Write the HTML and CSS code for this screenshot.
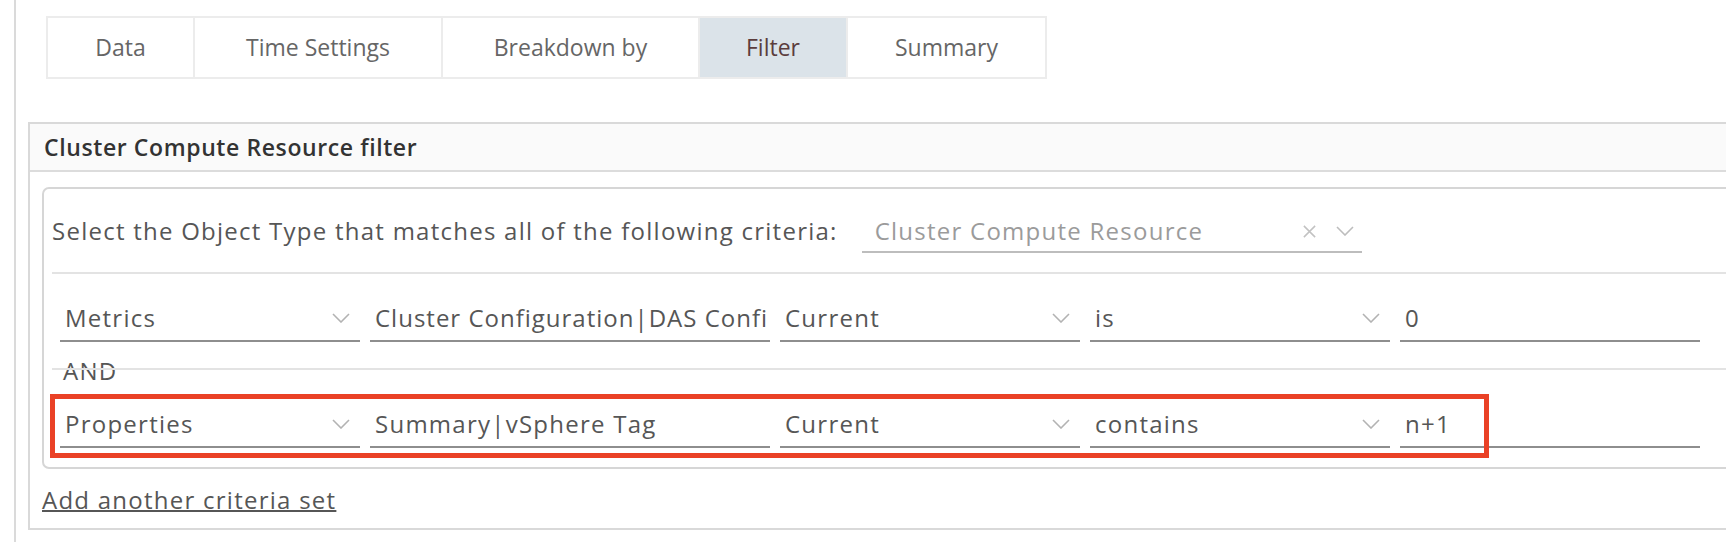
FILE: index.html
```html
<!DOCTYPE html>
<html lang="en">
<head>
<meta charset="utf-8">
<title>Filter</title>
<link rel="stylesheet" href="styles.css">
</head>
<body>
<div class="page">
  <nav class="tabs">
    <div class="tab tab--data">Data</div>
    <div class="tab tab--time">Time Settings</div>
    <div class="tab tab--breakdown">Breakdown by</div>
    <div class="tab tab--filter tab--active">Filter</div>
    <div class="tab tab--summary">Summary</div>
  </nav>

  <section class="panel">
    <header class="panel__head">Cluster Compute Resource filter</header>
    <div class="panel__body">
      <div class="criteria">
        <div class="type-row">
          <span class="type-label text">Select the Object Type that matches all of the following criteria:</span>
          <div class="select select--type text">
            <span class="select__value placeholder">Cluster Compute Resource</span>
            <svg class="icon-x" viewBox="0 0 16 16"><path d="M2 2 L14 14 M14 2 L2 14"/></svg>
            <svg class="chev chev--type" viewBox="0 0 18 10"><path d="M1 1 L9 9 L17 1"/></svg>
          </div>
        </div>

        <div class="rule-row">
          <div class="select w300 text"><span class="select__value">Metrics</span><svg class="chev" viewBox="0 0 18 10"><path d="M1 1 L9 9 L17 1"/></svg></div>
          <div class="select w400 text select--tight"><span class="select__value">Cluster Configuration|DAS Confi</span></div>
          <div class="select w300 text"><span class="select__value">Current</span><svg class="chev" viewBox="0 0 18 10"><path d="M1 1 L9 9 L17 1"/></svg></div>
          <div class="select w300 text"><span class="select__value">is</span><svg class="chev" viewBox="0 0 18 10"><path d="M1 1 L9 9 L17 1"/></svg></div>
          <div class="select w300 text"><span class="select__value">0</span></div>
        </div>

        <div class="and text">AND</div>

        <div class="rule-row rule-row--last">
          <div class="select w300 text"><span class="select__value">Properties</span><svg class="chev" viewBox="0 0 18 10"><path d="M1 1 L9 9 L17 1"/></svg></div>
          <div class="select w400 text"><span class="select__value">Summary|vSphere Tag</span></div>
          <div class="select w300 text"><span class="select__value">Current</span><svg class="chev" viewBox="0 0 18 10"><path d="M1 1 L9 9 L17 1"/></svg></div>
          <div class="select w300 text"><span class="select__value">contains</span><svg class="chev" viewBox="0 0 18 10"><path d="M1 1 L9 9 L17 1"/></svg></div>
          <div class="select w300 text"><span class="select__value">n+1</span></div>
          <div class="highlight"></div>
        </div>
      </div>
      <a class="add-link text" href="#">Add another criteria set</a>
    </div>
  </section>
</div>
</body>
</html>
```

FILE: styles.css
```css
body {
  margin: 0;
  overflow: hidden;
  background: #fff;
  font-family: "Open Sans", "Liberation Sans", sans-serif;
}

.page {
  margin-left: 14px;
  border-left: 2px solid #dadada;
  min-height: 542px;
  padding-top: 16px;
  box-sizing: border-box;
}

/* Tabs */
.tabs {
  display: flex;
  width: max-content;
  margin-left: 30px;
  border: 2px solid #ececec;
}
.tab {
  text-align: center;
  line-height: 59px;
  font-size: 23px;
  color: #666;
}
.tab + .tab {
  border-left: 2px solid #ececec;
}
.tab--data { width: 145px; }
.tab--time { width: 246px; }
.tab--breakdown { width: 255px; }
.tab--filter { width: 146px; }
.tab--summary { width: 197px; }
.tab--active {
  background: #dbe3e9;
  color: #5b3d3d;
}

/* Panel */
.panel {
  margin: 43px -30px 0 12px;
  border: 2px solid #d9d9d9;
}
.panel__head {
  background: #fafafa;
  border-bottom: 2px solid #dcdcdc;
  padding-left: 14px;
  font-size: 23px;
  font-weight: 600;
  letter-spacing: 0.6px;
  line-height: 46px;
  color: #333;
}
.panel__body {
  padding: 15px 0 11px 12px;
}

.text {
  font-size: 24px;
  letter-spacing: 1.25px;
  color: #565656;
}

.criteria {
  border: 2px solid #d6d6d6;
  border-radius: 7px;
}

.type-row {
  margin-left: 8px;
  display: flex;
  align-items: flex-end;
  padding: 25px 0 19px;
  border-bottom: 2px solid #e3e3e3;
}
.type-label {
  line-height: 34px;
  padding-bottom: 5px;
  white-space: nowrap;
}

.select {
  display: flex;
  align-items: center;
  box-sizing: border-box;
  line-height: 34px;
  padding: 0 0 5px 5px;
  border-bottom: 2px solid #8e8e8e;
  flex: none;
}
.select--tight {
  letter-spacing: 1px;
}
.select--type {
  width: 500px;
  margin-left: 24px;
  padding: 0 0 3px 13px;
  border-bottom-color: #bdbdbd;
}
.w300 { width: 300px; }
.w400 { width: 400px; }

.select__value {
  flex: 1;
  min-width: 0;
  white-space: nowrap;
  overflow: hidden;
}
.placeholder {
  color: #9b9b9b;
}

.chev {
  flex: none;
  width: 18px;
  height: 10px;
  margin-right: 10px;
  fill: none;
  stroke: #b3b3b3;
  stroke-width: 1.6;
}
.chev--type {
  margin-right: 8px;
  stroke: #bdbdbd;
}
.icon-x {
  flex: none;
  width: 15px;
  height: 15px;
  margin-right: 19px;
  fill: none;
  stroke: #c2c2c2;
  stroke-width: 1.6;
}

.rule-row {
  position: relative;
  margin-left: 8px;
  padding: 27px 0 26px 8px;
  display: flex;
  gap: 10px;
  border-bottom: 2px solid #e3e3e3;
}
.rule-row--last {
  padding-bottom: 19px;
  border-bottom: 0;
}

.and {
  margin: -8px 0 0 8px;
  padding-left: 11px;
  line-height: 18px;
}

.highlight {
  position: absolute;
  left: -2px;
  top: 14px;
  width: 1439px;
  height: 64px;
  box-sizing: border-box;
  border: 5px solid #ea4126;
  pointer-events: none;
}

.add-link {
  display: block;
  width: max-content;
  margin-top: 14px;
  line-height: 34px;
  text-decoration: underline;
  text-decoration-thickness: 2px;
}
```
